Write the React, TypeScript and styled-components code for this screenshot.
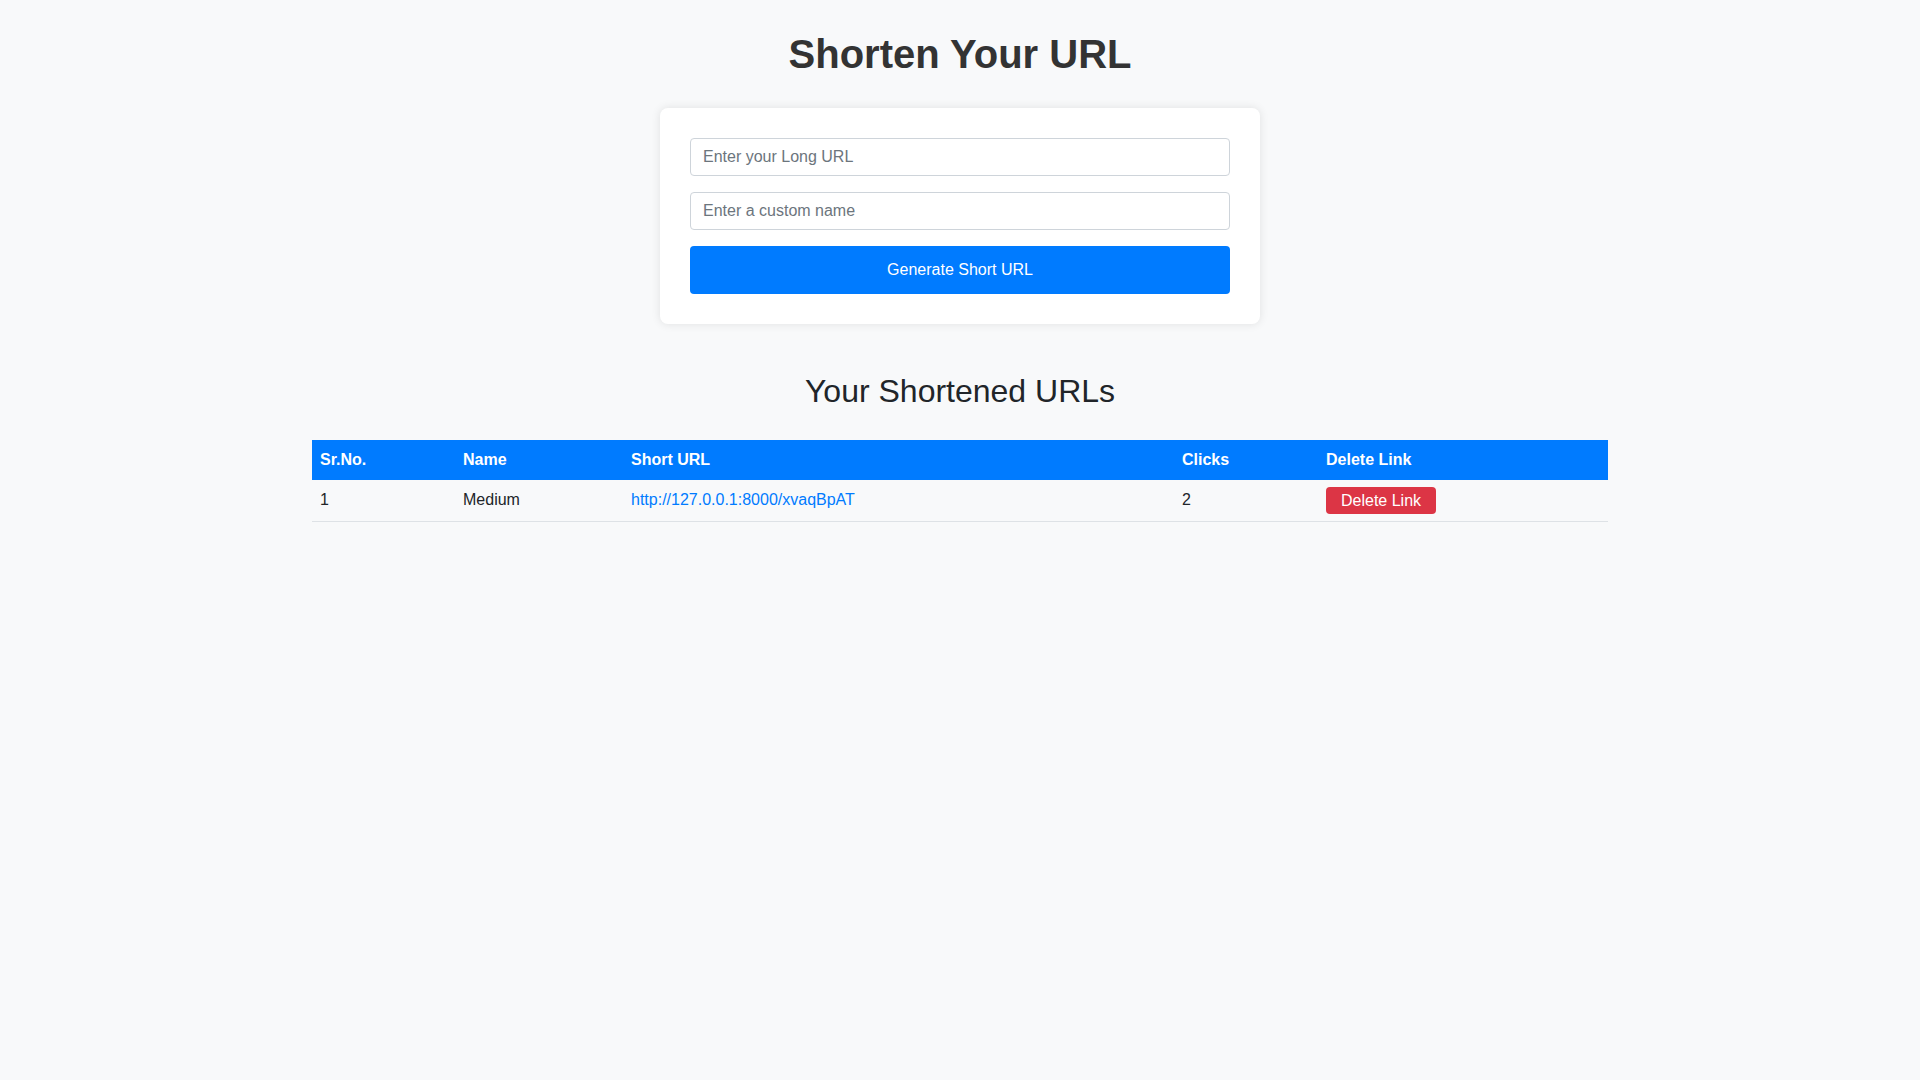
import React from "react";
import styled, { createGlobalStyle } from "styled-components";

const GlobalStyle = createGlobalStyle`
  * { box-sizing: border-box; }
  html, body {
    margin: 0;
    padding: 0;
    background: #f8f9fa;
    font-family: "Liberation Sans", Arial, sans-serif;
    color: #212529;
  }
`;

const Page = styled.div`
  min-height: 100vh;
  background: #f8f9fa;
`;

const Container = styled.div`
  max-width: 1320px;
  margin: 0 auto;
  padding: 30px 12px 40px;
`;

const Title = styled.h1`
  margin: 0 0 30px;
  font-size: 40px;
  line-height: 48px;
  font-weight: 700;
  color: #333;
  text-align: center;
`;

const Card = styled.form`
  width: 600px;
  margin: 0 auto;
  padding: 30px;
  background: #fff;
  border-radius: 8px;
  box-shadow: 0 0 10px rgba(0, 0, 0, 0.1);
  display: flex;
  flex-direction: column;
  gap: 16px;
`;

const Input = styled.input`
  width: 100%;
  height: 38px;
  padding: 6px 12px;
  border: 1px solid #ced4da;
  border-radius: 4px;
  font-family: inherit;
  font-size: 16px;
  color: #495057;
  background: #fff;
  outline: none;
  &::placeholder {
    color: #6c757d;
  }
`;

const PrimaryButton = styled.button`
  width: 100%;
  height: 48px;
  border: none;
  border-radius: 4px;
  background: #007bff;
  color: #fff;
  font-family: inherit;
  font-size: 16px;
  cursor: pointer;
`;

const SubTitle = styled.h2`
  margin: 48px 0 30px;
  font-size: 32px;
  line-height: 38px;
  font-weight: 400;
  color: #212529;
  text-align: center;
`;

const Table = styled.table`
  width: 100%;
  border-collapse: collapse;
  table-layout: fixed;
`;

const HeadCell = styled.th<{ $w?: number }>`
  ${(p) => (p.$w ? `width: ${p.$w}px;` : "")}
  height: 40px;
  padding: 0 8px;
  background: #007bff;
  color: #fff;
  font-size: 16px;
  font-weight: 700;
  text-align: left;
  vertical-align: middle;
`;

const Cell = styled.td`
  height: 41px;
  padding: 0 8px;
  font-size: 16px;
  color: #212529;
  text-align: left;
  vertical-align: middle;
  border-bottom: 1px solid #dee2e6;
`;

const Link = styled.a`
  color: #007bff;
  text-decoration: none;
`;

const DangerButton = styled.button`
  padding: 4px 15px;
  border: none;
  border-radius: 4px;
  background: #dc3545;
  color: #fff;
  font-family: inherit;
  font-size: 16px;
  line-height: 19px;
  cursor: pointer;
`;

const rows = [
  { id: 1, name: "Medium", url: "http://127.0.0.1:8000/xvaqBpAT", clicks: 2 },
];

export default function App() {
  return (
    <Page>
      <GlobalStyle />
      <Container>
        <Title>Shorten Your URL</Title>
        <Card onSubmit={(e) => e.preventDefault()}>
          <Input type="text" placeholder="Enter your Long URL" />
          <Input type="text" placeholder="Enter a custom name" />
          <PrimaryButton type="submit">Generate Short URL</PrimaryButton>
        </Card>
        <SubTitle>Your Shortened URLs</SubTitle>
        <Table>
          <thead>
            <tr>
              <HeadCell $w={143}>Sr.No.</HeadCell>
              <HeadCell $w={168}>Name</HeadCell>
              <HeadCell $w={551}>Short URL</HeadCell>
              <HeadCell $w={144}>Clicks</HeadCell>
              <HeadCell>Delete Link</HeadCell>
            </tr>
          </thead>
          <tbody>
            {rows.map((r) => (
              <tr key={r.id}>
                <Cell>{r.id}</Cell>
                <Cell>{r.name}</Cell>
                <Cell>
                  <Link href={r.url}>{r.url}</Link>
                </Cell>
                <Cell>{r.clicks}</Cell>
                <Cell>
                  <DangerButton type="button">Delete Link</DangerButton>
                </Cell>
              </tr>
            ))}
          </tbody>
        </Table>
      </Container>
    </Page>
  );
}
